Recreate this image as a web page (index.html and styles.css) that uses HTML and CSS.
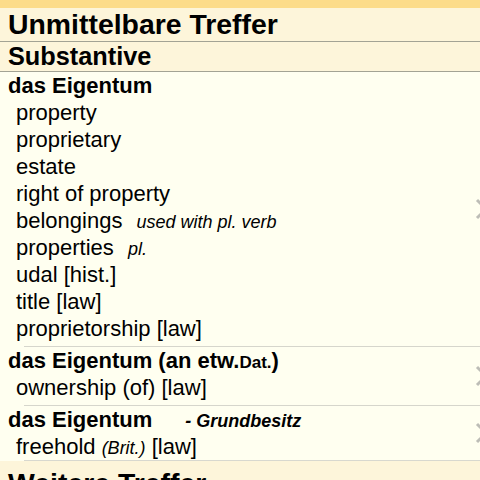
FILE: index.html
```html
<!DOCTYPE html>
<html lang="de">
<head>
<meta charset="utf-8">
<link rel="stylesheet" href="styles.css">
</head>
<body>
<div class="strip"></div>
<div class="h1">Unmittelbare Treffer</div>
<div class="h2">Substantive</div>

<div class="group">
  <div class="head">das Eigentum</div>
  <div class="tr">property</div>
  <div class="tr">proprietary</div>
  <div class="tr">estate</div>
  <div class="tr">right of property</div>
  <div class="tr">belongings <span class="note">used with pl. verb</span></div>
  <div class="tr">properties <span class="note">pl.</span></div>
  <div class="tr">udal [hist.]</div>
  <div class="tr">title [law]</div>
  <div class="tr">proprietorship [law]</div>
  <svg class="chev" width="14" height="22" viewBox="0 0 14 22"><path d="M2 2 L11 11 L2 20" fill="none" stroke="#bdbdb6" stroke-width="3"/></svg>
</div>

<div class="group">
  <div class="head">das Eigentum (an etw.<span class="small">Dat.</span>)</div>
  <div class="tr">ownership (of) [law]</div>
  <svg class="chev" width="14" height="22" viewBox="0 0 14 22"><path d="M2 2 L11 11 L2 20" fill="none" stroke="#bdbdb6" stroke-width="3"/></svg>
</div>

<div class="group last">
  <div class="head">das Eigentum <span class="topic">- Grundbesitz</span></div>
  <div class="tr">freehold <span class="it">(Brit.)</span> [law]</div>
  <svg class="chev" width="14" height="22" viewBox="0 0 14 22"><path d="M2 2 L11 11 L2 20" fill="none" stroke="#bdbdb6" stroke-width="3"/></svg>
</div>

<div class="h1 more">Weitere Treffer</div>
</body>
</html>
```

FILE: styles.css
```css
html, body {
  margin: 0;
  padding: 0;
  width: 480px;
  height: 480px;
  overflow: hidden;
}
body {
  background: #fffff0;
  font-family: "Liberation Sans", Arial, sans-serif;
  color: #000;
}
.strip {
  height: 8px;
  background: #fcdc8a;
}
.h1 {
  height: 33px;
  line-height: 32px;
  font-size: 28.4px;
  font-weight: bold;
  padding-left: 8px;
  background: #fdf5da;
  border-bottom: 1px solid #a3a394;
  white-space: nowrap;
}
.h2 {
  height: 29px;
  line-height: 29px;
  font-size: 25.3px;
  font-weight: bold;
  padding-left: 8px;
  background: #fdf5da;
  border-bottom: 1px solid #a3a394;
}
.group {
  position: relative;
  padding-bottom: 4px;
  border-bottom: 1px solid #d6d6cc;
  margin-left: 24px;
}
.group.last {
  padding-bottom: 0;
  border-bottom-color: #d8d8cf;
}
.head {
  margin-left: -16px;
  font-size: 22px;
  font-weight: bold;
  line-height: 27px;
  height: 27px;
  white-space: nowrap;
}
.tr {
  margin-left: -8px;
  font-size: 22px;
  line-height: 27px;
  height: 27px;
  white-space: nowrap;
}
.note {
  font-style: italic;
  font-size: 18px;
  margin-left: 8px;
}
.it {
  font-style: italic;
  font-size: 18px;
}
.small {
  font-size: 17px;
}
.topic {
  font-style: italic;
  font-size: 18px;
  margin-left: 27px;
}
.chev {
  position: absolute;
  right: -9px;
  top: 50%;
  margin-top: -11px;
}
.more {
  border-bottom: none;
  height: 40px;
  line-height: 40px;
  padding-top: 2px;
}
```
